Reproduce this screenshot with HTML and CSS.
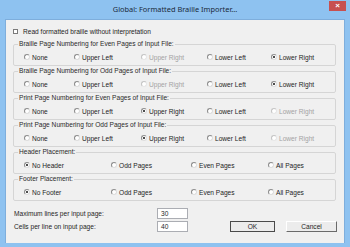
FILE: index.html
```html
<!DOCTYPE html>
<html lang="en">
<head>
    <meta charset="UTF-8">
    <title>Global: Formatted Braille Importer...</title>
    <link rel="stylesheet" href="styles.css">
</head>
<body>
    <div class="window">
        <div class="titlebar">
            <span></span>
            <span class="title">Global: Formatted Braille Importer...</span>
            <span class="close">&#215;</span>
        </div>

        <div class="client">
            <label class="check-row"><span class="checkbox"></span>Read formatted braille without interpretation</label>

            <fieldset class="group">
                <legend>Braille Page Numbering for Even Pages of Input File:</legend>
                <div class="options five">
                    <span class="opt"><span class="radio"></span>None</span>
                    <span class="opt"><span class="radio"></span>Upper Left</span>
                    <span class="opt disabled"><span class="radio"></span>Upper Right</span>
                    <span class="opt"><span class="radio"></span>Lower Left</span>
                    <span class="opt"><span class="radio on"></span>Lower Right</span>
                </div>
            </fieldset>

            <fieldset class="group">
                <legend>Braille Page Numbering for Odd Pages of Input File:</legend>
                <div class="options five">
                    <span class="opt"><span class="radio"></span>None</span>
                    <span class="opt"><span class="radio"></span>Upper Left</span>
                    <span class="opt disabled"><span class="radio"></span>Upper Right</span>
                    <span class="opt"><span class="radio"></span>Lower Left</span>
                    <span class="opt"><span class="radio on"></span>Lower Right</span>
                </div>
            </fieldset>

            <fieldset class="group">
                <legend>Print Page Numbering for Even Pages of Input File:</legend>
                <div class="options five">
                    <span class="opt"><span class="radio"></span>None</span>
                    <span class="opt"><span class="radio"></span>Upper Left</span>
                    <span class="opt"><span class="radio on"></span>Upper Right</span>
                    <span class="opt"><span class="radio"></span>Lower Left</span>
                    <span class="opt disabled"><span class="radio"></span>Lower Right</span>
                </div>
            </fieldset>

            <fieldset class="group">
                <legend>Print Page Numbering for Odd Pages of Input File:</legend>
                <div class="options five">
                    <span class="opt"><span class="radio"></span>None</span>
                    <span class="opt"><span class="radio"></span>Upper Left</span>
                    <span class="opt"><span class="radio on"></span>Upper Right</span>
                    <span class="opt"><span class="radio"></span>Lower Left</span>
                    <span class="opt disabled"><span class="radio"></span>Lower Right</span>
                </div>
            </fieldset>

            <fieldset class="group">
                <legend>Header Placement:</legend>
                <div class="options four">
                    <span class="opt"><span class="radio on"></span>No Header</span>
                    <span class="opt"><span class="radio"></span>Odd Pages</span>
                    <span class="opt"><span class="radio"></span>Even Pages</span>
                    <span class="opt"><span class="radio"></span>All Pages</span>
                </div>
            </fieldset>

            <fieldset class="group">
                <legend>Footer Placement:</legend>
                <div class="options four">
                    <span class="opt"><span class="radio on"></span>No Footer</span>
                    <span class="opt"><span class="radio"></span>Odd Pages</span>
                    <span class="opt"><span class="radio"></span>Even Pages</span>
                    <span class="opt"><span class="radio"></span>All Pages</span>
                </div>
            </fieldset>

            <div class="bottom">
                <span class="field-label row1">Maximum lines per input page:</span>
                <span class="field row1">30</span>
                <span class="field-label row2">Cells per line on input page:</span>
                <span class="field row2">40</span>
                <span class="btn ok">OK</span>
                <span class="btn cancel">Cancel</span>
            </div>
        </div>
    </div>
</body>
</html>
```

FILE: styles.css
```css
* {
    margin: 0;
    padding: 0;
    box-sizing: border-box;
}
body {
    font-family: "Liberation Sans", Arial, sans-serif;
    background-color: #fff;
    color: #1e1e1e;
}
.window {
    width: 350px;
    height: 247px;
    background: #8ec2f0;
    display: flex;
    flex-direction: column;
}
.titlebar {
    height: 19px;
    display: grid;
    grid-template-columns: 1fr auto 1fr;
    align-items: start;
}
.title {
    font-family: "Noto Sans", "Open Sans", sans-serif;
    font-size: 7.4px;
    line-height: 19px;
    color: #1a2a3a;
}
.close {
    justify-self: end;
    width: 17px;
    height: 10px;
    margin: 1px 4px 0 0;
    background: #c75050;
    color: #fff;
    font-size: 8px;
    line-height: 10px;
    text-align: center;
    font-weight: bold;
}
.client {
    margin: 0 5px;
    height: 224px;
    background: #f0f0f0;
    border: 1px solid #7eaedc;
    border-bottom: none;
    padding: 0 8px 0 7px;
    font-size: 6.6px;
}
.check-row {
    display: flex;
    align-items: center;
    height: 8px;
    margin-top: 7px;
    margin-bottom: 5px;
}
.checkbox {
    width: 5px;
    height: 5px;
    background: #fff;
    border: 1px solid #7a7a7a;
    margin-right: 5px;
}
.group {
    border: 1px solid #d5d5d5;
    border-radius: 2px;
    padding: 4px 0 3px 10px;
    margin-bottom: 1px;
}
.group legend {
    height: 8px;
    line-height: 8px;
    padding: 0 1px;
    margin-left: -6px;
    color: #2a2a2a;
}
.options {
    display: grid;
    height: 10px;
    align-items: center;
}
.options.five {
    grid-template-columns: 50px 67px 66px 64px 1fr;
}
.options.four {
    grid-template-columns: 87px 80px 77px 1fr;
}
.opt {
    display: flex;
    align-items: center;
    white-space: nowrap;
}
.radio {
    width: 6px;
    height: 6px;
    border-radius: 50%;
    background: #fff;
    border: 1px solid #8c8c8c;
    border-right-color: #dcdcdc;
    border-bottom-color: #dcdcdc;
    margin-right: 2px;
    display: flex;
    align-items: center;
    justify-content: center;
}
.radio.on::after {
    content: "";
    width: 2px;
    height: 2px;
    border-radius: 50%;
    background: #111;
}
.opt.disabled {
    color: #a3a3a3;
}
.opt.disabled .radio {
    border-color: #c4c4c4;
    border-right-color: #e6e6e6;
    border-bottom-color: #e6e6e6;
}
.bottom {
    display: grid;
    grid-template-columns: 144px 31px 42px 45px 11px 51px;
    grid-template-rows: 11px 11px;
    row-gap: 2px;
    align-items: center;
    margin-top: 7px;
}
.row1 {
    grid-row: 1;
}
.row2 {
    grid-row: 2;
}
.field-label {
    grid-column: 1;
    padding-left: 1px;
}
.field {
    grid-column: 2;
    height: 11px;
    background: #fff;
    border: 1px solid #abadb3;
    line-height: 9px;
    padding-left: 3px;
}
.btn {
    grid-row: 2;
    height: 11px;
    line-height: 9px;
    text-align: center;
    background: #ececec;
    border: 1px solid #fff;
    border-right-color: #6a6a6a;
    border-bottom-color: #6a6a6a;
}
.btn.ok {
    grid-column: 4;
    border: 1px solid #4a4a4a;
}
.btn.cancel {
    grid-column: 6;
}
```
